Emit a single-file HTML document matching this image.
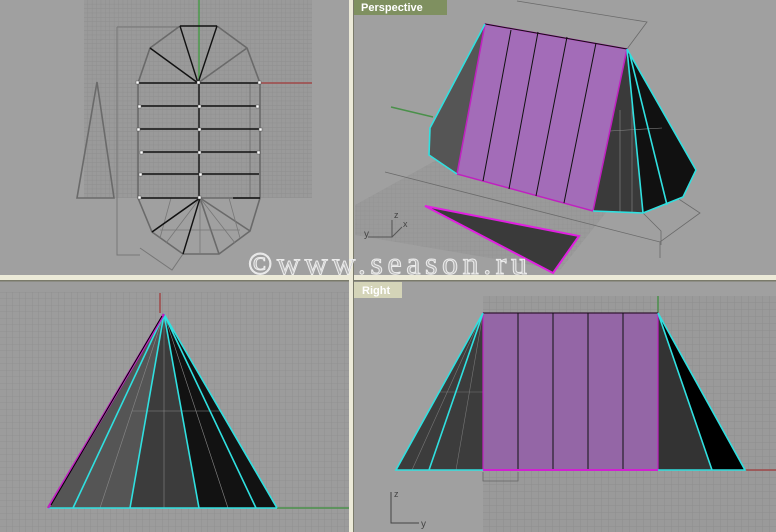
<!DOCTYPE html>
<html><head><meta charset="utf-8"><style>
html,body{margin:0;padding:0;width:776px;height:532px;overflow:hidden;background:#a0a0a0}
svg{display:block}
</style></head><body>
<svg width="776" height="532" viewBox="0 0 776 532" xmlns="http://www.w3.org/2000/svg">
<defs>
<pattern id="g4" width="4.4" height="4.4" patternUnits="userSpaceOnUse"><path d="M4.4 0V4.4H0" fill="none" stroke="#8c8c8c" stroke-width="0.7"/></pattern>
<pattern id="g6" x="0" y="0" width="6.5" height="6.5" patternUnits="userSpaceOnUse"><path d="M6.5 0V6.5H0" fill="none" stroke="#8e8e8e" stroke-width="0.8"/></pattern>
<pattern id="g7" x="483" y="296" width="7" height="7" patternUnits="userSpaceOnUse"><path d="M7 0V7H0" fill="none" stroke="#8c8c8c" stroke-width="0.8"/></pattern>
</defs>
<rect width="776" height="532" fill="#a0a0a0"/>

<!-- TOP LEFT -->
<rect x="84" y="0" width="228" height="198" fill="#9a9a9a"/>
<rect x="84" y="0" width="228" height="198" fill="url(#g4)"/>
<g fill="none" stroke="#777" stroke-width="1">
<path d="M117 27H180M117 27V255H140M250 83V198"/>
<path d="M140 248L172 270L183 254"/>
</g>
<line x1="199" y1="0" x2="199" y2="83" stroke="#4a9a4a" stroke-width="1.5"/>
<line x1="260" y1="83" x2="312" y2="83" stroke="#a04848" stroke-width="1.5"/>
<g fill="none" stroke="#6a6a6a" stroke-width="1.6">
<path d="M180 26L150 48L138 83V198L152 232L183 254H219L250 231L260 198V83L247 48L217 26"/>
<path d="M198 83L247 48M200 198L152 232M200 198L219 254M200 198L250 231M200 198L260 198"/>
<path d="M97 82L77 198H114Z"/>
</g>
<g stroke="#777" stroke-width="0.8" fill="none">
<path d="M200 198L166 243M200 198L200 254M200 198L235 243M171 198L160 238M229 198L240 238M160 230L240 230"/>
</g>
<g stroke="#111" stroke-width="1.4" fill="none">
<path d="M180 26H217M198 83L180 26M198 83L217 26M198 83L150 48"/>
<path d="M138 83H260M140 106H258M139 129H260M141 152H258M140 174H259M140 198H200M233 198H260M199 83V198"/>
<path d="M200 198L152 232M200 198L183 254"/>
</g>
<g fill="#fff" stroke="#555" stroke-width="0.5">
<rect x="136" y="81" width="3" height="3"/><rect x="197" y="81" width="3" height="3"/><rect x="258" y="81" width="3" height="3"/>
<rect x="138" y="105" width="3" height="3"/><rect x="198" y="105" width="3" height="3"/><rect x="256" y="105" width="3" height="3"/>
<rect x="137" y="128" width="3" height="3"/><rect x="198" y="128" width="3" height="3"/><rect x="259" y="128" width="3" height="3"/>
<rect x="140" y="151" width="3" height="3"/><rect x="198" y="151" width="3" height="3"/><rect x="257" y="151" width="3" height="3"/>
<rect x="139" y="173" width="3" height="3"/><rect x="199" y="173" width="3" height="3"/>
<rect x="138" y="196" width="3" height="3"/><rect x="198" y="196" width="3" height="3"/>
</g>

<!-- TOP RIGHT -->
<polygon points="355,205 500,125 640,170 560,270 355,235" fill="#9a9a9a"/>
<polygon points="355,205 500,125 640,170 560,270 355,235" fill="url(#g4)" opacity="0.6"/>
<g fill="none" stroke="#6a6a6a" stroke-width="0.8">
<path d="M517 1L647 22L627 49M385 172L660 242L700 213L662 188M660 242L660 258"/>
<path d="M643 213L661 231L661 245"/>
</g>
<line x1="391" y1="107" x2="433" y2="117" stroke="#4a904a" stroke-width="1.5"/>
<polygon points="485,24 430,128 429,155 457,174" fill="#555"/>
<polygon points="627,49 696,170 683,197 643,213 593,211" fill="#3a3a3a"/>
<polygon points="627,49 696,170 683,197 643,213" fill="#111"/>
<g stroke="#888" stroke-width="0.6" fill="none"><path d="M610 131L662 128M620 110V213M632 100V213"/></g>
<polygon points="485,24 627,49 593,211 457,174" fill="#a36cb8" stroke="#c020c0" stroke-width="1.5"/>
<g stroke="#111" stroke-width="1" fill="none">
<path d="M511 30L483 181M538 32L509 189M567 37L536 196M596 43L564 203"/>
<path d="M485 24L627 49"/>
</g>
<g stroke="#30e0e0" stroke-width="1.6" fill="none">
<path d="M485 24L430 128L429 155L457 174"/>
<path d="M627 49L696 170L683 197L643 213L593 211"/>
<path d="M627 49L643 213M630 55L667 205"/>
</g>
<polygon points="425,206 579,236 553,273" fill="#3a3a3a" stroke="#e020e0" stroke-width="2"/>
<g stroke="#555" stroke-width="1" fill="none"><path d="M392 220V237H368M392 237L402 227"/></g>
<text x="394" y="218" font-family="Liberation Sans, sans-serif" font-size="9" fill="#444">z</text>
<text x="403" y="227" font-family="Liberation Sans, sans-serif" font-size="9" fill="#444">x</text>
<text x="364" y="237" font-family="Liberation Sans, sans-serif" font-size="10" fill="#444">y</text>
<rect x="353" y="0" width="94" height="15" fill="#7f9060"/>
<text x="361" y="11" font-family="Liberation Sans, sans-serif" font-weight="bold" font-size="11" fill="#fff">Perspective</text>

<!-- BOTTOM LEFT -->
<rect x="0" y="281" width="349" height="251" fill="#9c9c9c"/>
<rect x="0" y="292" width="349" height="240" fill="url(#g6)"/>
<line x1="160" y1="293" x2="160" y2="313" stroke="#a04848" stroke-width="1.5"/>
<line x1="277" y1="508" x2="349" y2="508" stroke="#4a904a" stroke-width="1.5"/>
<polygon points="164,314 48,508 130,508" fill="#555"/>
<polygon points="164,314 130,508 199,508" fill="#3c3c3c"/>
<polygon points="164,314 199,508 277,508" fill="#121212"/>
<g stroke="#888" stroke-width="0.6" fill="none"><path d="M164 314V508M132 411H220M164 314L100 508M164 314L228 508"/></g>
<g stroke="#30e0e0" stroke-width="1.6" fill="none">
<path d="M164 314L73 508M164 314L130 508M164 314L199 508M164 314L256 508M164 314L277 508M48 508H277"/>
</g>
<path d="M164 314L48 508" stroke="#c020c0" stroke-width="2.5" fill="none"/>
<path d="M162 316L51 505" stroke="#000" stroke-width="1" fill="none"/>

<!-- BOTTOM RIGHT -->
<rect x="353" y="281" width="423" height="251" fill="#a0a0a0"/>
<rect x="483" y="296" width="293" height="236" fill="#9a9a9a"/>
<rect x="483" y="296" width="293" height="236" fill="url(#g7)"/>
<line x1="658" y1="296" x2="658" y2="313" stroke="#4a904a" stroke-width="1.5"/>
<line x1="745" y1="470" x2="776" y2="470" stroke="#a04848" stroke-width="1.5"/>
<polygon points="483,313 396,470 483,470" fill="#3c3c3c"/>
<polygon points="658,313 745,470 658,470" fill="#333"/>
<polygon points="658,313 745,470 712,470" fill="#000"/>
<g stroke="#777" stroke-width="0.6" fill="none"><path d="M483 313L412 470M483 313L456 470M440 392H483"/></g>
<rect x="483" y="313" width="175" height="157" fill="#9466a6" stroke="#c020c0" stroke-width="1.2"/>
<g stroke="#111" stroke-width="1" fill="none"><path d="M518 313V470M553 313V470M588 313V470M623 313V470M483 313H658"/></g>
<line x1="483" y1="470" x2="658" y2="470" stroke="#d020d0" stroke-width="2"/>
<g stroke="#30e0e0" stroke-width="1.6" fill="none">
<path d="M483 313L396 470H483M483 313L429 470M658 313L745 470H658M658 313L712 470"/>
</g>
<path d="M483 472V481H518V472" stroke="#666" fill="none" stroke-width="0.8"/>
<g stroke="#444" stroke-width="1" fill="none"><path d="M391 492V523H419"/></g>
<text x="394" y="497" font-family="Liberation Sans, sans-serif" font-size="9" fill="#444">z</text>
<text x="421" y="527" font-family="Liberation Sans, sans-serif" font-size="10" fill="#444">y</text>
<rect x="353" y="282" width="49" height="16" fill="#d4d4b8"/>
<text x="362" y="294" font-family="Liberation Sans, sans-serif" font-weight="bold" font-size="11" fill="#fff">Right</text>

<!-- dividers -->
<rect x="0" y="275" width="776" height="5" fill="#ecead8"/>
<rect x="0" y="280" width="776" height="1.5" fill="#7a7a6a"/>
<rect x="349" y="0" width="4" height="532" fill="#ecead8"/>
<rect x="353" y="0" width="1" height="532" fill="#7a7a6a"/>

<!-- watermark -->
<text x="248" y="274" font-family="Liberation Serif, serif" font-size="32" textLength="279" lengthAdjust="spacing" fill="#b4b4b4" stroke="#ececec" stroke-width="1">©www.season.ru</text>
</svg>
</body></html>
